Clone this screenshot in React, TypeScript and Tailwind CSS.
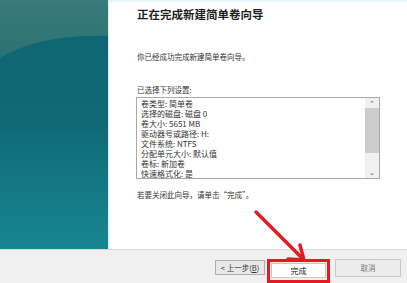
import React from "react";

const items = [
  "卷类型: 简单卷",
  "选择的磁盘: 磁盘 0",
  "卷大小: 5651 MB",
  "驱动器号或路径: H:",
  "文件系统: NTFS",
  "分配单元大小: 默认值",
  "卷标: 新加卷",
  "快速格式化: 是",
];

export default function App() {
  return (
    <div
      className="relative w-[407px] h-[283px] overflow-hidden flex flex-col bg-white text-[#1e1e1e]"
      style={{ fontFamily: '"Noto Sans CJK SC", "Noto Sans", sans-serif' }}
    >
      <div className="flex h-[252px]">
        <div className="relative w-[108px] h-full overflow-hidden bg-gradient-to-b from-[#0e6570] via-[#0f6a76] to-[#188692]">
          <svg width="108" height="252" className="absolute inset-0">
            <defs>
              <linearGradient id="tp" x1="0" y1="0" x2="0" y2="1">
                <stop offset="0" stopColor="#3a7b7b" />
                <stop offset="1" stopColor="#2c7272" />
              </linearGradient>
            </defs>
            <path d="M0 0 H108 V36 Q40 34 0 58 Z" fill="url(#tp)" />
          </svg>
        </div>
        <div className="w-px bg-[#d8eef2]" />
        <div className="flex-1 flex flex-col pl-[27px] border-t-2 border-[#e4f6f9]">
          <div className="mt-[5px] text-[11.5px] leading-[14px] font-bold pl-px">
            正在完成新建简单卷向导
          </div>
          <div className="mt-[31px] text-[7.5px] leading-[10px] pl-px text-[#333]">
            你已经成功完成新建简单卷向导。
          </div>
          <div className="mt-[23px] text-[7.5px] leading-[10px] pl-px text-[#333]">
            已选择下列设置:
          </div>
          <div className="mt-[2px] w-[244px] h-[82px] border border-[#a8a8a8] flex bg-white">
            <div className="flex-1 overflow-hidden pl-[4px] pt-[1px]">
              {items.map((t) => (
                <div key={t} className="text-[8px] leading-[10px] text-[#333] whitespace-nowrap">
                  {t}
                </div>
              ))}
            </div>
            <div className="w-[14px] bg-[#f0f0f0] flex flex-col items-center">
              <div className="h-[10px] text-[7px] leading-[10px] text-[#555]">⌃</div>
              <div className="w-[14px] h-[45px] bg-[#cdcdcd]" />
              <div className="flex-1" />
              <div className="h-[10px] text-[7px] leading-[8px] text-[#555]">⌄</div>
            </div>
          </div>
          <div className="mt-[11px] text-[7.5px] leading-[10px] pl-px text-[#333]">
            若要关闭此向导，请单击“完成”。
          </div>
        </div>
      </div>
      <div className="flex-1 bg-[#f0f0f0] border-t border-[#dadada] flex items-start pl-[215px] pt-[9px]">
        <div className="mt-[1px] w-[50px] h-[15px] border border-[#adadad] bg-[#e8e8e8] flex items-center justify-center text-[7.5px] text-[#333]">
          &lt; 上一步(<span className="underline">B</span>)
        </div>
        <div className="ml-[2px] w-[63px] h-[24px] border-[3px] border-[#e51a1f] p-[1px]">
          <div className="w-full h-[15px] bg-white border border-[#c8c8c8] flex items-center justify-center text-[8px] text-[#222]">
            完成
          </div>
        </div>
        <div className="ml-[5px] w-[66px] h-[18px] border border-[#c8c8c8] bg-[#ececec] flex items-center justify-center text-[7.5px] text-[#777]">
          取消
        </div>
      </div>
      <svg width="407" height="283" className="absolute inset-0 pointer-events-none">
        <g stroke="#e21d22" strokeWidth="3.5" strokeLinecap="round" fill="none">
          <line x1="256" y1="212" x2="303" y2="259" />
          <polyline points="300,245 304,260 288,259" strokeLinejoin="miter" />
        </g>
      </svg>
    </div>
  );
}
